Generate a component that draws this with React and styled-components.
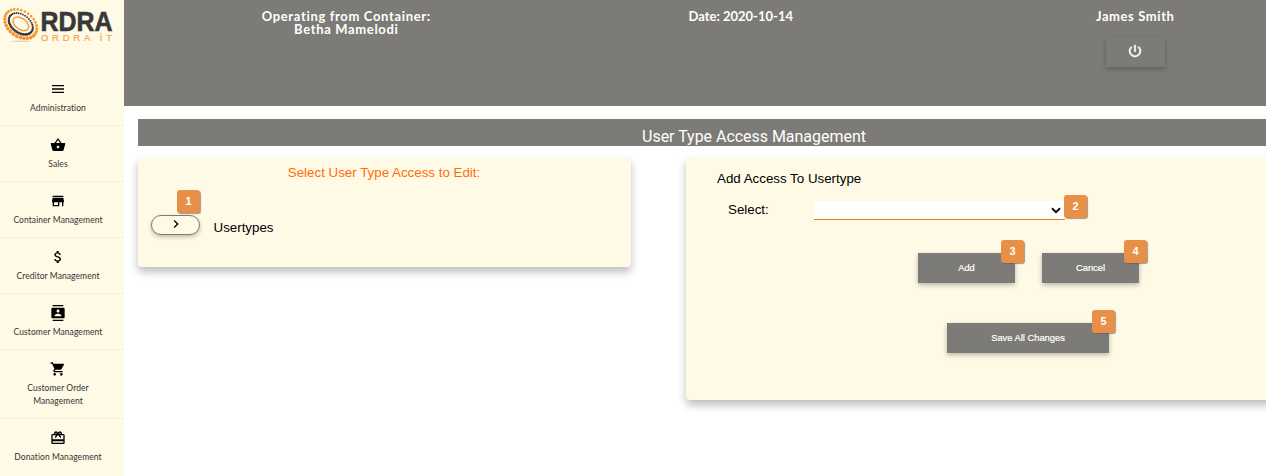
import React from 'react';
import styled, { createGlobalStyle } from 'styled-components';
import {
  MdMenu, MdShoppingBasket, MdStore, MdAttachMoney, MdContacts,
  MdShoppingCart, MdCardGiftcard, MdPowerSettingsNew, MdChevronRight,
} from 'react-icons/md';

const cream = '#fffae6';
const grey = '#7d7b77';

const GlobalStyle = createGlobalStyle`
  * { box-sizing: border-box; }
  body {
    margin: 0;
    background: #fff;
    overflow: hidden;
    font-family: "Liberation Sans", Arial, sans-serif;
  }
`;

const Page = styled.div`
  display: flex;
  height: 476px;
  overflow: hidden;
`;

const Sidebar = styled.nav`
  flex: none;
  width: 124px;
  background: ${cream};
`;

const Brand = styled.div`
  height: 70px;
  svg { display: block; }
`;

const NavItem = styled.a`
  display: flex;
  flex-direction: column;
  align-items: center;
  gap: 5px;
  padding: 11px 8px 10px 0;
  border-bottom: 1px solid #f5ecdc;
  color: #000;
  svg { display: block; }
  &:last-child { border-bottom: 0; }
`;

const NavLabel = styled.span`
  font: 400 8.5px/13px Lato, sans-serif;
  font-variant-ligatures: none;
  letter-spacing: 0.07px;
  color: #333;
  text-align: center;
  white-space: pre;
`;

const Main = styled.main`
  flex: 1;
  min-width: 0;
  overflow: hidden;
`;

const Header = styled.header`
  display: grid;
  grid-template-columns: repeat(3, 394.5px);
  height: 106px;
  padding: 10px 0 0 25px;
  background: ${grey};
`;

const HeaderCell = styled.div`
  display: flex;
  flex-direction: column;
  align-items: center;
  color: #fff;
`;

const HeaderText = styled.div`
  font: 700 13px/13px Lato, sans-serif;
  font-variant-ligatures: none;
  letter-spacing: ${(p) => p.$spacing}px;
  white-space: nowrap;
`;

const PowerButton = styled.button`
  display: flex;
  align-items: center;
  justify-content: center;
  width: 59px;
  height: 30px;
  margin-top: 14px;
  padding: 0 0 3px;
  border: 0;
  background: ${grey};
  color: #fff;
  box-shadow: 0 2px 5px rgba(0, 0, 0, 0.24);
  path:not([fill='none']) { stroke: currentColor; stroke-width: 0.8px; }
`;

const Content = styled.section`
  padding: 13px 0 0 14px;
`;

const TitleBar = styled.h1`
  width: 1232px;
  height: 27px;
  margin: 0;
  padding-top: 4px;
  background: ${grey};
  color: #fff;
  font: 400 16px/27px Roboto, sans-serif;
  letter-spacing: -0.03px;
  text-align: center;
`;

const Panels = styled.div`
  display: flex;
  align-items: flex-start;
  gap: 55px;
  margin-top: 11px;
`;

const Panel = styled.div`
  flex: none;
  width: ${(p) => p.$width}px;
  height: ${(p) => p.$height}px;
  border-radius: 4px;
  background: ${cream};
  box-shadow: 0 5px 8px rgba(0, 0, 0, 0.26);
  font-size: 13.33px;
  line-height: 16px;
  color: #000;
`;

const Prompt = styled.div`
  padding: 8px 1px 0 0;
  color: #ff6c0c;
  text-align: center;
`;

const TypeRow = styled.div`
  display: flex;
  align-items: flex-start;
  gap: 13.5px;
  padding: 34px 0 0 13px;
`;

const TypeName = styled.span`
  margin-top: 5px;
`;

const Anchor = styled.div`
  position: relative;
  display: flex;
`;

const ExpandButton = styled.button`
  display: flex;
  align-items: center;
  justify-content: center;
  width: 49px;
  height: 20px;
  padding: 0 0 2px;
  border: 1px solid ${grey};
  border-radius: 10px;
  background: ${cream};
  color: #000;
  box-shadow: 0 2px 4px rgba(0, 0, 0, 0.25);
`;

const Badge = styled.span`
  position: absolute;
  top: ${(p) => p.$top}px;
  right: ${(p) => p.$right}px;
  width: 23px;
  height: 23px;
  border-radius: 3px;
  background: #e88f48;
  box-shadow: 1px 1px 1px rgba(90, 90, 90, 0.6);
  color: #fff;
  font: 700 11px/23px "Liberation Sans", Arial, sans-serif;
  text-align: center;
`;

const PanelHeading = styled.div`
  padding: 14px 0 0 31px;
`;

const SelectRow = styled.div`
  display: flex;
  align-items: flex-start;
  padding: 14px 0 0 42px;
`;

const SelectLabel = styled.label`
  width: 86px;
  padding-top: 1px;
`;

const SelectBox = styled.div`
  display: flex;
  align-items: center;
  justify-content: flex-end;
  width: 251px;
  height: 19px;
  padding: 1px 4px 0 0;
  border-bottom: 1px solid #f57c00;
  background: #fff;
`;

const Actions = styled.div`
  display: flex;
  gap: 27px;
  padding: ${(p) => p.$top}px 0 0 ${(p) => p.$left}px;
`;

const ActionButton = styled.button`
  width: ${(p) => p.$width}px;
  height: 30px;
  padding: 0;
  border: 0;
  background: ${grey};
  color: #fff;
  font: 400 9.33px "Liberation Sans", Arial, sans-serif;
  -webkit-text-stroke: 0.2px #fff;
  box-shadow: 0 2px 5px rgba(0, 0, 0, 0.28);
`;

const navItems = [
  { icon: MdMenu, label: 'Administration' },
  { icon: MdShoppingBasket, label: 'Sales' },
  { icon: MdStore, label: 'Container Management' },
  { icon: MdAttachMoney, label: 'Creditor Management' },
  { icon: MdContacts, label: 'Customer Management' },
  { icon: MdShoppingCart, label: 'Customer Order\nManagement' },
  { icon: MdCardGiftcard, label: 'Donation Management' },
];

function ring(count, rx, ry, size, color) {
  return Array.from({ length: count }, (_, i) => {
    const a = (i / count) * Math.PI * 2;
    const grow = 0.9 + 0.2 * Math.sin(a + 0.3);
    return (
      <circle key={i} cx={rx * Math.cos(a)} cy={ry * Math.sin(a)} r={size * grow} fill={color} />
    );
  });
}

function Logo() {
  return (
    <svg width="124" height="50" viewBox="0 0 124 50">
      <ellipse cx="21" cy="41.3" rx="10" ry="0.8" fill="#dcd6c6" />
      <g transform="translate(20.8 23.8) rotate(36)">
        {ring(28, 17.6, 12.6, 1.8, '#f6982f')}
        {ring(34, 13.3, 9, 1.3, '#383838')}
        <ellipse rx="8.8" ry="5.6" fill="none" stroke="#f3a04a" strokeWidth="1.5" />
      </g>
      <text x="40.5" y="31" textLength="72" lengthAdjust="spacingAndGlyphs" fill="#383838"
        stroke="#383838" strokeWidth="0.6"
        fontFamily="Liberation Sans, Arial, sans-serif" fontWeight="700" fontSize="27">RDRA</text>
      <text x="41" y="41" textLength="71" fill="#f6a545" stroke="#f6a545" strokeWidth="0.2"
        fontFamily="Liberation Sans, Arial, sans-serif" fontSize="9.5">ORDRA İT</text>
    </svg>
  );
}

export default function App() {
  return (
    <Page>
      <GlobalStyle />
      <Sidebar>
        <Brand><Logo /></Brand>
        {navItems.map(({ icon: Icon, label }) => (
          <NavItem key={label}>
            <Icon size={16} />
            <NavLabel>{label}</NavLabel>
          </NavItem>
        ))}
      </Sidebar>
      <Main>
        <Header>
          <HeaderCell>
            <HeaderText $spacing={0.66}>Operating from Container:</HeaderText>
            <HeaderText $spacing={0.66}>Betha Mamelodi</HeaderText>
          </HeaderCell>
          <HeaderCell><HeaderText $spacing={0}>Date: 2020-10-14</HeaderText></HeaderCell>
          <HeaderCell>
            <HeaderText $spacing={0.6}>James Smith</HeaderText>
            <PowerButton aria-label="Log out"><MdPowerSettingsNew size={16} /></PowerButton>
          </HeaderCell>
        </Header>
        <Content>
          <TitleBar>User Type Access Management</TitleBar>
          <Panels>
            <Panel $width={493} $height={110}>
              <Prompt>Select User Type Access to Edit:</Prompt>
              <TypeRow>
                <Anchor>
                  <ExpandButton aria-label="Expand"><MdChevronRight size={16} /></ExpandButton>
                  <Badge $top={-25} $right={0}>1</Badge>
                </Anchor>
                <TypeName>Usertypes</TypeName>
              </TypeRow>
            </Panel>
            <Panel $width={684} $height={243}>
              <PanelHeading>Add Access To Usertype</PanelHeading>
              <SelectRow>
                <SelectLabel>Select:</SelectLabel>
                <Anchor>
                  <SelectBox>
                    <svg width="10" height="7" viewBox="0 0 10 7">
                      <path d="M1 1.3 L5 5.2 L9 1.3" fill="none" stroke="#111" strokeWidth="2" />
                    </svg>
                  </SelectBox>
                  <Badge $top={-6} $right={-22}>2</Badge>
                </Anchor>
              </SelectRow>
              <Actions $top={33} $left={232}>
                <Anchor>
                  <ActionButton $width={97}>Add</ActionButton>
                  <Badge $top={-13} $right={-9}>3</Badge>
                </Anchor>
                <Anchor>
                  <ActionButton $width={97}>Cancel</ActionButton>
                  <Badge $top={-13} $right={-8}>4</Badge>
                </Anchor>
              </Actions>
              <Actions $top={40} $left={261}>
                <Anchor>
                  <ActionButton $width={162}>Save All Changes</ActionButton>
                  <Badge $top={-13} $right={-6}>5</Badge>
                </Anchor>
              </Actions>
            </Panel>
          </Panels>
        </Content>
      </Main>
    </Page>
  );
}
